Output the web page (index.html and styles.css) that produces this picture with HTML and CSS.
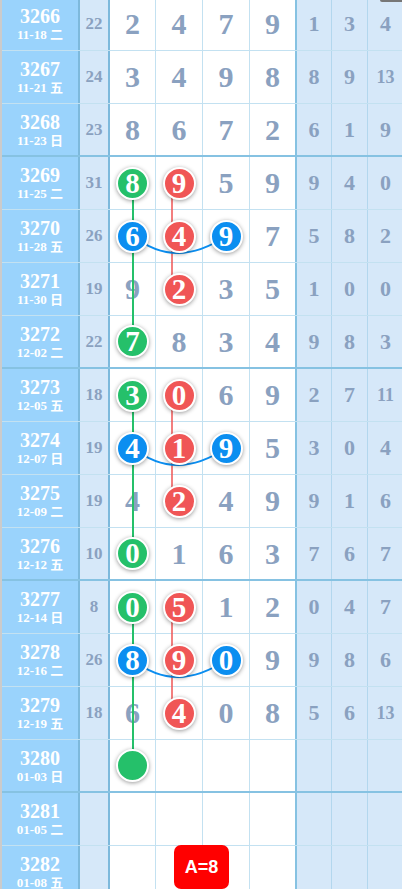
FILE: index.html
```html
<!DOCTYPE html>
<html lang="zh">
<head>
  <meta charset="UTF-8">
  <meta name="viewport" content="width=device-width, initial-scale=1.0">
  <title>走势图</title>
  <link rel="stylesheet" href="styles.css">
</head>
<body>
  <div class="page">
    <div class="board">
      <div class="row">
        <div class="issue"><b>3266</b><span>11-18 二</span></div>
        <div class="sum">22</div>
        <div class="num">2</div><div class="num">4</div><div class="num">7</div><div class="num last">9</div>
        <div class="dist">1</div><div class="dist">3</div><div class="dist">4</div>
      </div>
      <div class="row">
        <div class="issue"><b>3267</b><span>11-21 五</span></div>
        <div class="sum">24</div>
        <div class="num">3</div><div class="num">4</div><div class="num">9</div><div class="num last">8</div>
        <div class="dist">8</div><div class="dist">9</div><div class="dist small">13</div>
      </div>
      <div class="row end">
        <div class="issue"><b>3268</b><span>11-23 日</span></div>
        <div class="sum">23</div>
        <div class="num">8</div><div class="num">6</div><div class="num">7</div><div class="num last">2</div>
        <div class="dist">6</div><div class="dist">1</div><div class="dist">9</div>
      </div>

      <div class="row">
        <div class="issue"><b>3269</b><span>11-25 二</span></div>
        <div class="sum">31</div>
        <div class="num"><span class="ball green">8</span></div><div class="num"><span class="ball red">9</span></div><div class="num">5</div><div class="num last">9</div>
        <div class="dist">9</div><div class="dist">4</div><div class="dist">0</div>
      </div>
      <div class="row">
        <div class="issue"><b>3270</b><span>11-28 五</span></div>
        <div class="sum">26</div>
        <div class="num"><span class="ball blue">6</span></div><div class="num"><span class="ball red">4</span></div><div class="num"><span class="ball blue">9</span></div><div class="num last">7</div>
        <div class="dist">5</div><div class="dist">8</div><div class="dist">2</div>
      </div>
      <div class="row">
        <div class="issue"><b>3271</b><span>11-30 日</span></div>
        <div class="sum">19</div>
        <div class="num">9</div><div class="num"><span class="ball red">2</span></div><div class="num">3</div><div class="num last">5</div>
        <div class="dist">1</div><div class="dist">0</div><div class="dist">0</div>
      </div>
      <div class="row end">
        <div class="issue"><b>3272</b><span>12-02 二</span></div>
        <div class="sum">22</div>
        <div class="num"><span class="ball green">7</span></div><div class="num">8</div><div class="num">3</div><div class="num last">4</div>
        <div class="dist">9</div><div class="dist">8</div><div class="dist">3</div>
      </div>

      <div class="row">
        <div class="issue"><b>3273</b><span>12-05 五</span></div>
        <div class="sum">18</div>
        <div class="num"><span class="ball green">3</span></div><div class="num"><span class="ball red">0</span></div><div class="num">6</div><div class="num last">9</div>
        <div class="dist">2</div><div class="dist">7</div><div class="dist small">11</div>
      </div>
      <div class="row">
        <div class="issue"><b>3274</b><span>12-07 日</span></div>
        <div class="sum">19</div>
        <div class="num"><span class="ball blue">4</span></div><div class="num"><span class="ball red">1</span></div><div class="num"><span class="ball blue">9</span></div><div class="num last">5</div>
        <div class="dist">3</div><div class="dist">0</div><div class="dist">4</div>
      </div>
      <div class="row">
        <div class="issue"><b>3275</b><span>12-09 二</span></div>
        <div class="sum">19</div>
        <div class="num">4</div><div class="num"><span class="ball red">2</span></div><div class="num">4</div><div class="num last">9</div>
        <div class="dist">9</div><div class="dist">1</div><div class="dist">6</div>
      </div>
      <div class="row end">
        <div class="issue"><b>3276</b><span>12-12 五</span></div>
        <div class="sum">10</div>
        <div class="num"><span class="ball green">0</span></div><div class="num">1</div><div class="num">6</div><div class="num last">3</div>
        <div class="dist">7</div><div class="dist">6</div><div class="dist">7</div>
      </div>

      <div class="row">
        <div class="issue"><b>3277</b><span>12-14 日</span></div>
        <div class="sum">8</div>
        <div class="num"><span class="ball green">0</span></div><div class="num"><span class="ball red">5</span></div><div class="num">1</div><div class="num last">2</div>
        <div class="dist">0</div><div class="dist">4</div><div class="dist">7</div>
      </div>
      <div class="row">
        <div class="issue"><b>3278</b><span>12-16 二</span></div>
        <div class="sum">26</div>
        <div class="num"><span class="ball blue">8</span></div><div class="num"><span class="ball red">9</span></div><div class="num"><span class="ball blue">0</span></div><div class="num last">9</div>
        <div class="dist">9</div><div class="dist">8</div><div class="dist">6</div>
      </div>
      <div class="row">
        <div class="issue"><b>3279</b><span>12-19 五</span></div>
        <div class="sum">18</div>
        <div class="num">6</div><div class="num"><span class="ball red">4</span></div><div class="num">0</div><div class="num last">8</div>
        <div class="dist">5</div><div class="dist">6</div><div class="dist small">13</div>
      </div>
      <div class="row end">
        <div class="issue"><b>3280</b><span>01-03 日</span></div>
        <div class="sum"></div>
        <div class="num"><span class="ball green"></span></div><div class="num"></div><div class="num"></div><div class="num last"></div>
        <div class="dist"></div><div class="dist"></div><div class="dist"></div>
      </div>

      <div class="row">
        <div class="issue"><b>3281</b><span>01-05 二</span></div>
        <div class="sum"></div>
        <div class="num"></div><div class="num"></div><div class="num"></div><div class="num last"></div>
        <div class="dist"></div><div class="dist"></div><div class="dist"></div>
      </div>
      <div class="row">
        <div class="issue"><b>3282</b><span>01-08 五</span></div>
        <div class="sum"></div>
        <div class="num"></div><div class="num"></div><div class="num"></div><div class="num last"></div>
        <div class="dist"></div><div class="dist"></div><div class="dist"></div>
      </div>

      <!-- 连线 -->
      <svg class="links" width="402" height="920" viewBox="0 0 402 920">
        <g fill="none" stroke="#25c06a" stroke-width="2">
          <line x1="131" y1="185" x2="131" y2="344"/>
          <line x1="131" y1="397" x2="131" y2="556"/>
          <line x1="131" y1="609" x2="131" y2="768"/>
        </g>
        <g fill="none" stroke="#ef5555" stroke-width="1.5">
          <line x1="170" y1="185" x2="170" y2="291"/>
          <line x1="170" y1="397" x2="170" y2="503"/>
          <line x1="170" y1="609" x2="170" y2="715"/>
        </g>
        <g fill="none" stroke="#0b8ef0" stroke-width="2">
          <path d="M131 238 Q174 272 224 238"/>
          <path d="M131 450 Q174 484 224 450"/>
          <path d="M131 662 Q174 696 224 662"/>
        </g>
      </svg>
    </div>
  </div>

  <div class="scroll-tip"></div>
  <div class="badge">A=8</div>
</body>
</html>
```

FILE: styles.css
```css
html, body {
  margin: 0;
  padding: 0;
}
body {
  width: 402px;
  height: 889px;
  overflow: hidden;
  background-color: #cbcbcb;
  font-family: 'Liberation Serif', 'Noto Sans CJK SC', serif;
  font-weight: bold;
}
.page {
  padding-left: 2px;
  margin-top: -2px;
}
.board {
  position: relative;
  width: 402px;
  background-color: #fff;
}
.row {
  display: grid;
  grid-template-columns: 78px 30px 46px 47px 47px 47px 35px 36px 36px;
  height: 53px;
  box-sizing: border-box;
  border-bottom: 1px solid #c3e1f1;
}
.row.end {
  border-bottom: 2px solid #86c2e2;
}
.row > div {
  display: flex;
  align-items: center;
  justify-content: center;
  box-sizing: border-box;
  color: #8aa1c0;
}
.issue {
  flex-direction: column;
  background-color: #9ad3fc;
  border-right: 2px solid #7db9dc;
  color: #fff !important;
}
.issue b {
  font-size: 20px;
  line-height: 22px;
}
.issue span {
  font-size: 13px;
  line-height: 16px;
}
.sum {
  background-color: #d6e8f9;
  border-right: 2px solid #7db9dc;
  font-size: 17px;
}
.num {
  position: relative;
  background-color: #fff;
  border-right: 1px solid #c3e1f1;
  font-size: 30px;
}
.num.last {
  border-right: 2px solid #86c2e2;
}
.dist {
  background-color: #d6e8f9;
  border-right: 1px solid #b3d7ee;
  font-size: 22px;
}
.dist.small {
  font-size: 18px;
}
.ball {
  position: relative;
  z-index: 2;
  display: flex;
  align-items: center;
  justify-content: center;
  width: 33px;
  height: 33px;
  box-sizing: border-box;
  border: 2px solid #fff;
  border-radius: 50%;
  color: #fff;
  font-size: 29px;
  line-height: 1;
  box-shadow: 0 1px 4px rgba(0,0,0,0.4);
}
.ball.green {
  background-color: #25c06a;
}
.ball.red {
  background-color: #f05656;
}
.ball.blue {
  background-color: #0b8ef0;
}
.links {
  position: absolute;
  top: 0;
  left: 0;
  z-index: 1;
  pointer-events: none;
}
.scroll-tip {
  position: absolute;
  top: 0;
  right: 0;
  width: 22px;
  height: 2px;
  background-color: #777;
  border-radius: 0 0 0 2px;
}
.badge {
  position: absolute;
  left: 174px;
  top: 845px;
  width: 55px;
  height: 44px;
  line-height: 44px;
  text-align: center;
  background-color: #ff0000;
  border-radius: 7px;
  color: #fff;
  font-family: 'Liberation Sans', Arial, sans-serif;
  font-size: 18px;
  font-weight: bold;
  z-index: 3;
}
```
